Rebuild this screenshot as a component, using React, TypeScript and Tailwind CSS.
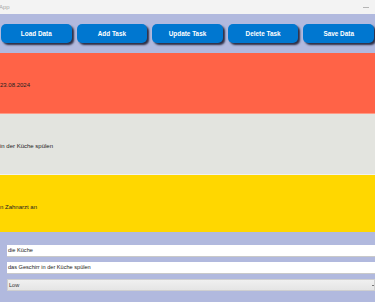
const buttons = ["Load Data", "Add Task", "Update Task", "Delete Task", "Save Data"];

const tasks = [
  { text: "23.08.2024", bg: "bg-[#ff6347]", line: "border-[#ff9a85]" },
  { text: "in der Küche spülen", bg: "bg-[#e3e4df]", line: "border-[#f2f2ef]" },
  { text: "n Zahnarzt an", bg: "bg-[#ffd700]", line: "border-[#ffe45c]" },
];

export default function App() {
  return (
    <div className="flex h-[302px] w-[375px] flex-col overflow-hidden bg-[#b1b9de] font-['Liberation_Sans',Arial,sans-serif]">
      {/* window title bar */}
      <div className="flex h-[14px] shrink-0 items-center justify-between bg-[#f3f3f3]">
        <span className="-ml-px text-[6px] leading-none text-[#a8a8a8]">App</span>
        <span className="mr-[6px] h-px w-[6px] bg-[#b5b5b5]" />
      </div>

      {/* toolbar */}
      <div className="grid grid-cols-5 gap-[5px] px-px pt-[10px]">
        {buttons.map((b) => (
          <button
            key={b}
            className="h-[19px] rounded-[5px] bg-[#0077d0] text-[6.4px] font-bold text-white shadow-[2px_2px_2px_rgba(20,20,40,0.85)]"
          >
            {b}
          </button>
        ))}
      </div>

      {/* task list, last item clipped by the list height */}
      <div className="mt-[10px] flex h-[179px] shrink-0 flex-col overflow-hidden">
        {tasks.map((t) => (
          <div
            key={t.text}
            className={`flex h-[61px] shrink-0 items-center border-b pt-[4px] ${t.bg} ${t.line}`}
          >
            <span className="text-[6px] leading-none text-[#222]">{t.text}</span>
          </div>
        ))}
      </div>

      {/* edit form */}
      <div className="mt-[13px] flex flex-col gap-[5px] pl-[7px]">
        <div className="flex h-[12px] items-center border-b border-[#c9c9c9] bg-white pl-px text-[5.6px] text-[#222]">
          die Küche
        </div>
        <div className="flex h-[12px] items-center border-b border-[#c9c9c9] bg-white pl-px text-[5.6px] text-[#222]">
          das Geschirr in der Küche spülen
        </div>
        <div className="flex h-[12px] items-center justify-between border border-[#cfcfcf] bg-gradient-to-b from-[#f0f0f0] to-[#e5e5e5] pl-px text-[5.6px] text-[#333]">
          <span>Low</span>
          <span className="h-px w-[2px] bg-[#777]" />
        </div>
      </div>
    </div>
  );
}
